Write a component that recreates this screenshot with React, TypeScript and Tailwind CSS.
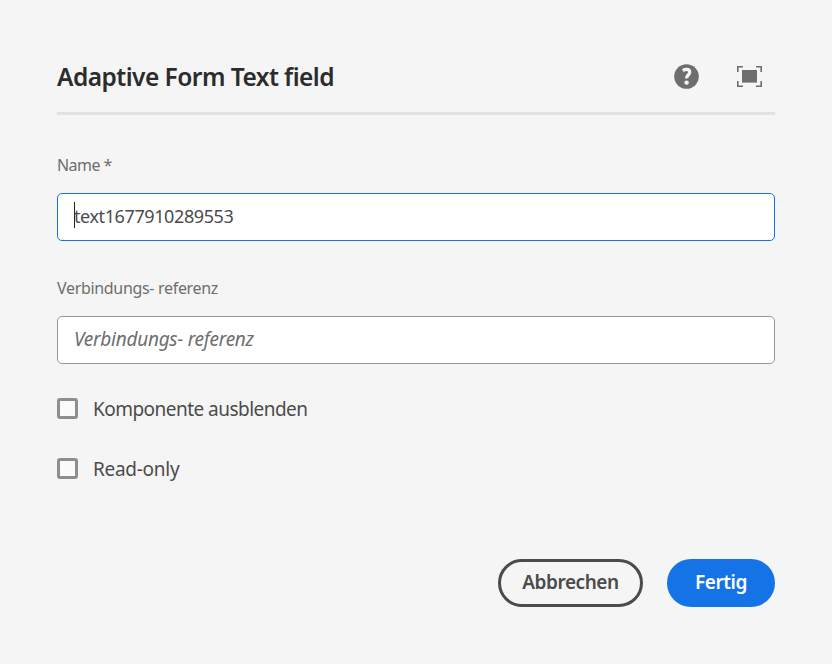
import React from "react";

function HelpIcon() {
  return (
    <svg width="25" height="25" viewBox="0 0 25 25" aria-hidden="true">
      <circle cx="12.5" cy="12.5" r="12.3" fill="#6e6e6e" />
      <path d="M8.8 6.6c1.2-.8 2.4-1.2 3.6-1.2 2 0 3.3 1 3.3 2.8 0 2.7-3.3 3-3.1 6.1" fill="none" stroke="#f5f5f5" strokeWidth="3.3" />
      <circle cx="12.6" cy="18.6" r="2.2" fill="#f5f5f5" />
    </svg>
  );
}

function FullscreenIcon() {
  return (
    <svg width="25" height="21" viewBox="0 0 25 21" aria-hidden="true">
      <rect x="5" y="4" width="15" height="12.6" fill="#6e6e6e" />
      <path d="M.8 6V.8H6M19 .8h5.2V6M24.2 15v5.2H19M6 20.2H.8V15" fill="none" stroke="#6e6e6e" strokeWidth="1.6" />
    </svg>
  );
}

function CheckRow({ label, spacing }: { label: string; spacing: string }) {
  return (
    <label className="flex h-[21px] items-center gap-[15px]">
      <span className="size-[21px] shrink-0 rounded-[3px] border-3 border-[#8e8e8e] bg-[#fafafa]" />
      <span className={`whitespace-nowrap pt-px text-[19px] text-[#4b4b4b] ${spacing}`}>{label}</span>
    </label>
  );
}

export default function App() {
  return (
    <main className="h-[664px] w-[832px] overflow-hidden bg-[#f5f5f5] px-[57px] pt-[42px] font-['Noto_Sans',sans-serif]">
      <header className="flex h-[73px] items-start justify-between border-b-3 border-[#e1e1e1] pr-[13px]">
        <h1 className="whitespace-nowrap text-[24.5px] font-semibold leading-[70px] tracking-[-0.54px] text-[#2c2c2c]">Adaptive Form Text field</h1>
        <div className="flex h-[69px] items-center gap-[38px]">
          <HelpIcon />
          <FullscreenIcon />
        </div>
      </header>
      <div className="mt-[38px] h-10 whitespace-nowrap text-[16px] leading-6 text-[#6e6e6e]"><span className="tracking-[-0.55px]">Name *</span></div>
      <div className="flex h-12 items-center rounded-[5px] border border-[#1473e6] bg-white pl-4 text-[#4b4b4b]">
        <span className="-mr-px h-[26px] w-px shrink-0 -translate-y-[2px] bg-[#222]" />
        <span className="-translate-y-px whitespace-nowrap text-[18px] tracking-[-0.4px]">text1677910289553</span>
      </div>
      <div className="mt-[35px] h-10 whitespace-nowrap text-[16px] leading-6 text-[#6e6e6e]"><span className="tracking-[-0.32px]">Verbindungs- referenz</span></div>
      <div className="flex h-12 items-center rounded-[5px] border border-[#959595] bg-white pl-4 text-[#6e6e6e]">
        <span className="-translate-y-px whitespace-nowrap text-[19px] italic tracking-[-0.27px]">Verbindungs- referenz</span>
      </div>
      <div className="mt-[34px] flex flex-col gap-[39px]">
        <CheckRow label="Komponente ausblenden" spacing="tracking-[-0.53px]" />
        <CheckRow label="Read-only" spacing="tracking-[-0.28px]" />
      </div>
      <footer className="mt-20 flex justify-end gap-6">
        <button className="h-12 w-[145px] whitespace-nowrap rounded-full border-3 border-[#4b4b4b] pb-0.5 text-[19px] font-semibold tracking-[-0.45px] text-[#4b4b4b]">Abbrechen</button>
        <button className="h-12 w-[108px] whitespace-nowrap rounded-full bg-[#1473e6] pb-0.5 text-[19px] font-semibold tracking-[-0.4px] text-white">Fertig</button>
      </footer>
    </main>
  );
}
